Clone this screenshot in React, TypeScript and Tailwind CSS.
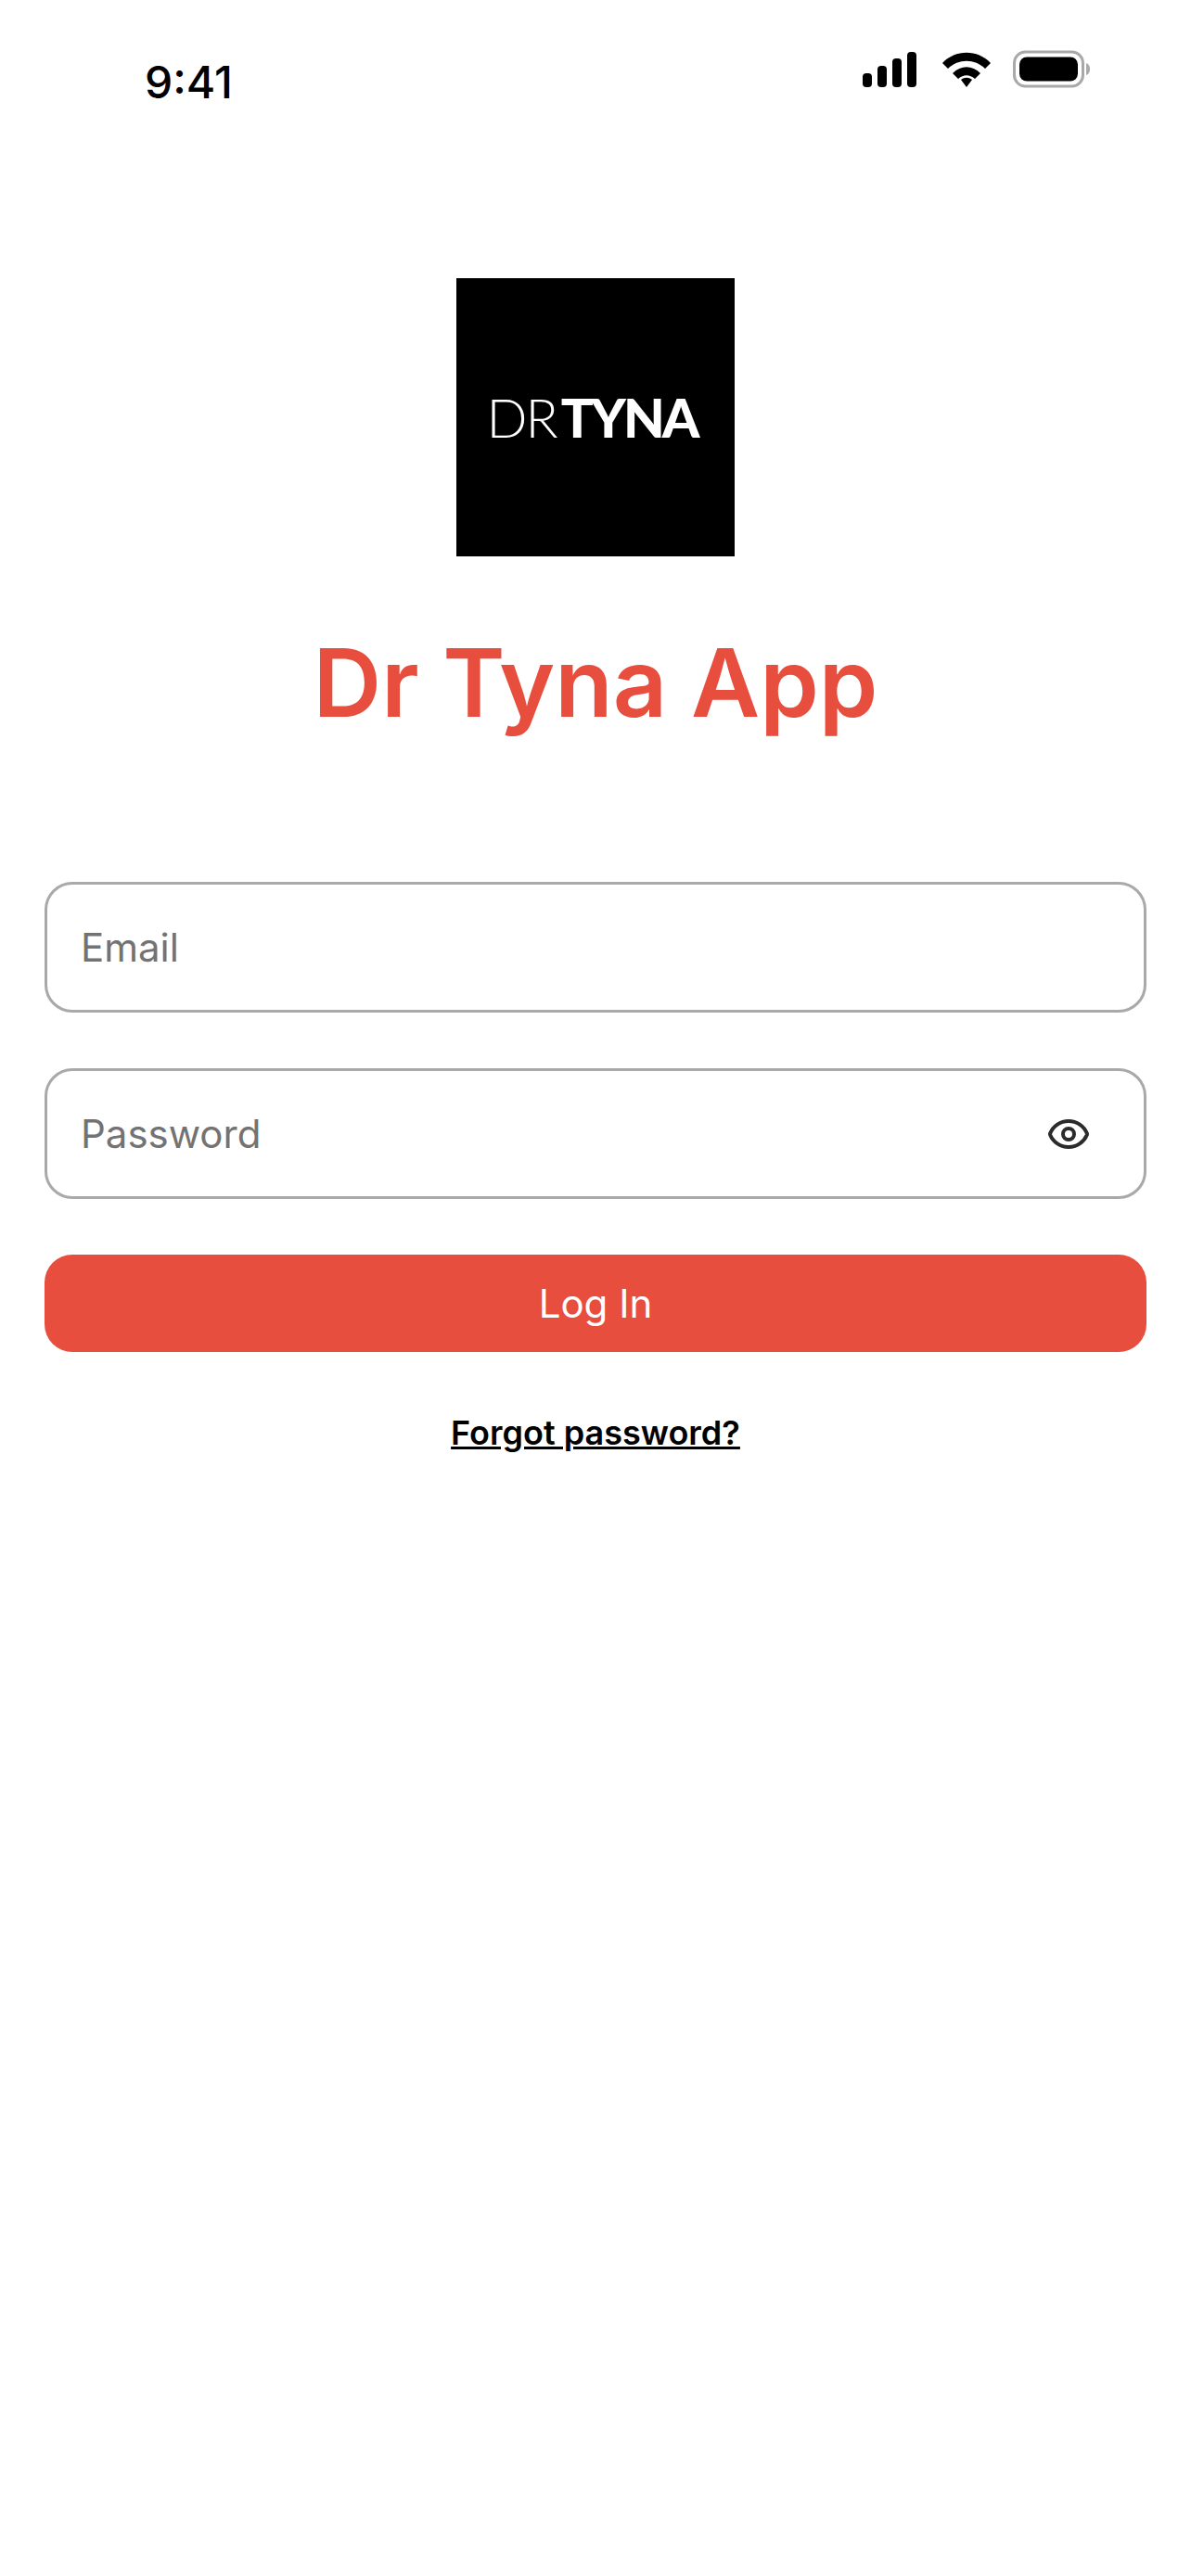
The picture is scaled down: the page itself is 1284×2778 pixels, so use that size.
import { Eye } from "lucide-react";

function StatusBar() {
  return (
    <div className="flex h-[150px] items-start justify-between pl-[156px] pr-[108px]">
      <span className="mt-[61px] text-[48px] leading-[56px] font-medium text-black">9:41</span>
      <div className="mt-[54px] flex items-center">
        <svg width="58" height="38" viewBox="0 0 58 38" fill="black">
          <rect x="0" y="23" width="10" height="15" rx="4" />
          <rect x="16" y="15" width="10" height="23" rx="4" />
          <rect x="32" y="7" width="10" height="31" rx="4" />
          <rect x="48" y="0" width="10" height="38" rx="4" />
        </svg>
        <svg className="ml-[28px]" width="52" height="38" viewBox="0 0 52 38" fill="black">
          <path d="M0 12 C14 -3 38 -3 52 12 L46 18 C35 7 17 7 6 18 Z" />
          <path d="M11 23 C20 14 32 14 41 23 L35 29 C29 24 23 24 17 29 Z" />
          <path d="M20 30 C24 27 28 27 32 30 L26 38 Z" />
        </svg>
        <svg className="ml-[24px]" width="84" height="42" viewBox="0 0 84 42">
          <rect x="1.5" y="2" width="74" height="37" rx="12" fill="none" stroke="#a9a9a9" strokeWidth="3" />
          <rect x="7" y="7.5" width="63" height="26" rx="8" fill="black" />
          <path d="M79 14 C82 15 83 18 83 20.5 C83 23 82 26 79 27 Z" fill="#a9a9a9" />
        </svg>
      </div>
    </div>
  );
}

export default function App() {
  return (
    <div className="min-h-[2778px] bg-white font-['Inter',sans-serif]">
      <StatusBar />
      <div className="flex flex-col items-center">
        <div className="mt-[150px] flex h-[300px] w-[300px] items-center justify-center bg-black pr-[8px] text-white">
          <span className="font-['Lato',sans-serif] text-[58px] leading-none font-light tracking-[-2px]">DR</span>
          <span className="ml-[5px] font-['Lato',sans-serif] text-[58px] leading-none font-black tracking-[-3px]">TYNA</span>
        </div>
        <h1 className="mt-[73px] text-[102px] leading-[126px] font-semibold text-[#e84e3e]">Dr Tyna App</h1>
      </div>
      <div className="mt-[152px] flex flex-col px-[48px]">
        <div className="flex h-[141px] items-center rounded-[30px] border-[3px] border-[#a9a9a9] px-[36px] text-[42px] text-[#737373]">
          Email
        </div>
        <div className="mt-[60px] flex h-[141px] items-center justify-between rounded-[30px] border-[3px] border-[#a9a9a9] pl-[36px] pr-[57px] text-[42px] text-[#737373]">
          Password
          <Eye className="h-[48px] w-[48px] text-[#2b2b2b]" strokeWidth={2} />
        </div>
        <button type="button" className="mt-[60px] h-[105px] rounded-[30px] bg-[#e84e3e] text-[42px] text-white">
          Log In
        </button>
      </div>
      <p className="mt-[62px] text-center text-[36px] leading-[50px] font-semibold text-black underline">Forgot password?</p>
    </div>
  );
}
